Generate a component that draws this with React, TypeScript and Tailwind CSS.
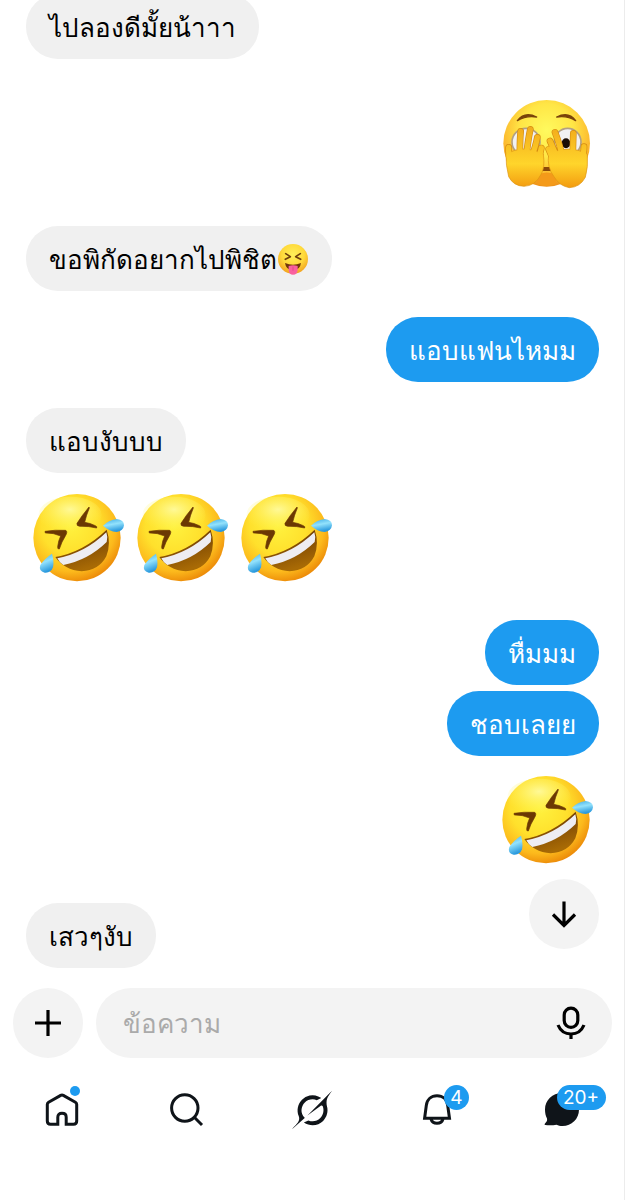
import React from "react";
import type { ReactNode } from "react";

function LaughEmoji({ id }: { id: string }) {
  return (
    <svg viewBox="18 18 312 312" className="size-[104px] shrink-0" role="img" aria-label="🤣">
      <defs>
        <radialGradient id={`${id}-face`} cx="0.42" cy="0.36" r="0.66">
          <stop offset="0" stopColor="#fff23f" />
          <stop offset="0.5" stopColor="#ffe02c" />
          <stop offset="0.8" stopColor="#fcb91c" />
          <stop offset="1" stopColor="#ec8a08" />
        </radialGradient>
        <radialGradient id={`${id}-shine`} cx="0.5" cy="0.35" r="0.6">
          <stop offset="0" stopColor="#fffdb0" stopOpacity="0.8" />
          <stop offset="1" stopColor="#fff35a" stopOpacity="0" />
        </radialGradient>
        <linearGradient id={`${id}-mouth`} x1="0" y1="0" x2="0.4" y2="1">
          <stop offset="0" stopColor="#5a2c02" />
          <stop offset="1" stopColor="#a86a05" />
        </linearGradient>
        <linearGradient id={`${id}-tear`} x1="0" y1="0" x2="0.3" y2="1">
          <stop offset="0" stopColor="#3aa9e6" />
          <stop offset="0.5" stopColor="#93e2fc" />
          <stop offset="1" stopColor="#2b9ade" />
        </linearGradient>
      </defs>
      <circle cx="171" cy="173" r="131" fill={`url(#${id}-face)`} />
      <ellipse cx="150" cy="105" rx="95" ry="55" fill={`url(#${id}-shine)`} />
      <path d="M75 154Q105 149 137 151Q144 155 136 168Q125 185 118 207Q112 208 113 200Q115 182 122 168Q100 158 76 159Z" fill="#6b3803" stroke="#6b3803" strokeWidth="2" />
      <path d="M207 81Q186 106 171 130Q169 138 179 139Q206 138 230 144Q232 139 226 137Q210 129 194 127Q199 105 208 84Z" fill="#6b3803" stroke="#6b3803" strokeWidth="2" />
      <path d="M106 231Q190 216 260 149Q274 190 259 229Q236 272 185 274Q133 270 106 231Z" fill={`url(#${id}-mouth)`} />
      <path d="M112 235Q195 219 259 157Q264 170 260 186Q205 240 130 255Q118 248 112 235Z" fill="#eeedf2" />
      <path d="M249 137Q268 119 290 117Q312 119 312 136Q310 153 290 156Q268 154 249 137Z" fill={`url(#${id}-tear)`} />
      <path d="M96 221Q72 237 61 255Q55 273 74 278Q92 280 99 262Q103 245 96 221Z" fill={`url(#${id}-tear)`} />
    </svg>
  );
}

const leftFingers = "M92 250Q84 220 86 202M120 235Q119 185 122 154M138 235Q144 180 151 148M154 235Q168 195 172 172M170 250Q181 225 184 204";
const rightFingers = "M226 250Q213 225 206 208M234 240Q220 205 210 183M249 235Q238 190 225 157M278 235Q279 190 280 160M303 250Q312 220 312 200";

function PeekEmoji() {
  return (
    <svg viewBox="45 33 312 312" className="size-[104px] shrink-0" role="img" aria-label="🫣">
      <defs>
        <radialGradient id="peek-face" cx="0.5" cy="0.35" r="0.68">
          <stop offset="0" stopColor="#fffa5e" />
          <stop offset="0.45" stopColor="#ffe646" />
          <stop offset="0.78" stopColor="#fcb52c" />
          <stop offset="1" stopColor="#e98714" />
        </radialGradient>
        <linearGradient id="peek-hand" gradientUnits="userSpaceOnUse" x1="0" y1="145" x2="0" y2="322">
          <stop offset="0" stopColor="#f3ad1c" />
          <stop offset="0.6" stopColor="#ffd52b" />
          <stop offset="1" stopColor="#f39c10" />
        </linearGradient>
      </defs>
      <circle cx="200" cy="190" r="130" fill="url(#peek-face)" />
      <g fill="#f1f1f3" stroke="#b3a082" strokeWidth="5">
        <ellipse cx="138" cy="186" rx="42" ry="41" />
        <ellipse cx="263" cy="186" rx="40" ry="41" />
      </g>
      <path d="M112 122Q134 93 170 111Q138 106 112 122ZM230 111Q266 93 287 122Q262 106 230 111Z" fill="#79430a" stroke="#79430a" strokeWidth="4" strokeLinejoin="round" />
      <ellipse cx="258" cy="190" rx="13" ry="15" fill="#1a0d05" />
      <path d="M180 261H218V273H180Z" fill="#8c4b0a" />
      <path d="M170 285Q200 270 232 285L226 312Q200 324 172 312Z" fill="#f49a1a" />
      <g fill="none" stroke="#d58c10" strokeWidth="20" strokeLinecap="round">
        <path d={leftFingers} />
        <path d={rightFingers} />
      </g>
      <g fill="url(#peek-hand)" stroke="#dd9412" strokeWidth="2">
        <path d="M78 222Q104 207 132 207Q162 207 190 222Q196 265 182 285Q165 318 132 319Q100 318 86 290Q77 255 78 222Z" />
        <path d="M206 222Q236 207 264 207Q295 207 322 222Q325 262 316 292Q300 322 268 323Q238 318 222 290Q200 262 206 222Z" />
      </g>
      <g fill="none" stroke="url(#peek-hand)" strokeWidth="16" strokeLinecap="round">
        <path d={leftFingers} />
        <path d={rightFingers} />
      </g>
    </svg>
  );
}

function TongueEmoji() {
  return (
    <svg viewBox="21 22 96 96" className="mb-1.5 inline-block size-8 align-middle" role="img" aria-label="😝">
      <defs>
        <radialGradient id="tongue-face" cx="0.5" cy="0.35" r="0.68">
          <stop offset="0" stopColor="#fff05a" />
          <stop offset="0.55" stopColor="#ffd93b" />
          <stop offset="1" stopColor="#f09a1c" />
        </radialGradient>
      </defs>
      <circle cx="69" cy="70" r="45" fill="url(#tongue-face)" />
      <path d="M47 54L61 63L46 71M91 54L77 63L92 71" fill="none" stroke="#70400d" strokeWidth="5" strokeLinecap="round" strokeLinejoin="round" />
      <path d="M45 82Q69 92 93 82Q90 104 69 104Q48 104 45 82Z" fill="#70350b" />
      <path d="M56 91Q69 86 83 91V102Q82 117 69 117Q57 117 56 102Z" fill="#f9609f" />
      <path d="M69 93V105" stroke="#d63c7c" strokeWidth="2" />
    </svg>
  );
}

function Received({ children }: { children: ReactNode }) {
  return <p className="self-start rounded-[32px] bg-[#f0f0f0] px-[23px] pt-1 text-[26px] leading-[61px] text-black">{children}</p>;
}

function Sent({ children }: { children: ReactNode }) {
  return <p className="self-end rounded-[32px] bg-[#1d9bf0] px-[23px] pt-1 text-[26px] leading-[61px] text-white">{children}</p>;
}

function Messages() {
  return (
    <section aria-label="Messages" className="relative flex flex-col overflow-hidden pr-[25px] pb-5 pl-[26px]">
      <div className="-mt-1.5 flex flex-col">
        <Received>ไปลองดีมั้ยน้าาา</Received>
      </div>
      <div className="mt-8 flex justify-end">
        <PeekEmoji />
      </div>
      <div className="mt-[31px] flex flex-col gap-[26px]">
        <Received>
          ขอพิกัดอยากไปพิชิต
          <TongueEmoji />
        </Received>
        <Sent>แอบแฟนไหมม</Sent>
        <Received>แอบงับบบ</Received>
      </div>
      <div className="mt-[13px] flex">
        <LaughEmoji id="laugh-a" />
        <LaughEmoji id="laugh-b" />
        <LaughEmoji id="laugh-c" />
      </div>
      <div className="mt-[30px] flex flex-col gap-1.5">
        <Sent>หื่มมม</Sent>
        <Sent>ชอบเลยย</Sent>
      </div>
      <div className="mt-3 flex justify-end">
        <LaughEmoji id="laugh-d" />
      </div>
      <div className="mt-[31px] flex flex-col">
        <Received>เสวๆงับ</Received>
      </div>
      <button type="button" aria-label="Scroll to latest" className="absolute right-[25px] bottom-[39px] flex size-[70px] items-center justify-center rounded-full bg-[#f3f3f3]">
        <svg viewBox="0 0 40 40" className="size-10" fill="none" stroke="#000" strokeWidth="3.2">
          <path d="M20 7.5V31M9 20.5L20 31.5L31 20.5" />
        </svg>
      </button>
    </section>
  );
}

function Composer() {
  return (
    <form className="flex gap-[13px] pr-3 pl-[13px]" onSubmit={(e) => e.preventDefault()}>
      <button type="button" aria-label="Add attachment" className="flex size-[70px] shrink-0 items-center justify-center rounded-full bg-[#f3f3f3]">
        <svg viewBox="0 0 40 40" className="size-10" fill="none" stroke="#000" strokeWidth="3.2">
          <path d="M20 7V33M7 20H33" />
        </svg>
      </button>
      <div className="flex h-[70px] min-w-0 flex-1 items-center rounded-full bg-[#f3f3f3] pr-[21px] pl-[27px]">
        <input
          type="text"
          aria-label="ข้อความ"
          placeholder="ข้อความ"
          className="h-full min-w-0 flex-1 bg-transparent pt-0.5 text-[26px] text-black outline-none placeholder:text-[#aaaaaa]"
        />
        <button type="button" aria-label="Record voice message">
          <svg viewBox="0 0 40 40" className="size-10" fill="none" stroke="#000" strokeWidth="3.2">
            <rect x="13.2" y="5.2" width="13.6" height="19.2" rx="6.8" />
            <path d="M7 22C9.5 28 14.2 31 20 31S30.500 28 33 22M20 31V36" />
          </svg>
        </button>
      </div>
    </form>
  );
}

function Tab({ label, children }: { label: string; children: ReactNode }) {
  return (
    <a href="#" aria-label={label} className="flex justify-center">
      <span className="relative block size-10">{children}</span>
    </a>
  );
}

function TabBar() {
  return (
    <nav className="grid grid-cols-5 pt-8">
      <Tab label="Home">
        <svg viewBox="0 0 40 40" className="size-10" fill="none" stroke="#0f1419" strokeWidth="3">
          <path d="M8.500 34.300Q5.300 34.300 5.300 31V14.500Q5.300 13 6.600 12.200L18.700 5.400Q20 4.700 21.300 5.400L33.400 12.200Q34.700 13 34.700 14.500V31Q34.700 34.300 31.500 34.300H24.200V27.200Q24.200 23.300 20 23.300T15.800 27.200V34.300Z" />
        </svg>
        <span className="absolute -top-1 right-[2px] size-2.5 rounded-full bg-[#1d9bf0]" />
      </Tab>
      <Tab label="Search">
        <svg viewBox="0 0 40 40" className="size-10" fill="none" stroke="#0f1419" strokeWidth="3">
          <circle cx="17.800" cy="18" r="13.200" />
          <path d="M27.300 27.300L35 35" />
        </svg>
      </Tab>
      <Tab label="Grok">
        <svg viewBox="0 0 24 24" className="size-10" fill="#0f1419">
          <path d="M9.270 15.290l7.978-5.897c.391-.29.95-.177 1.137.272.98 2.369.542 5.215-1.410 7.169-1.951 1.954-4.667 2.382-7.149 1.406l-2.711 1.257c3.889 2.661 8.611 2.003 11.562-.953 2.341-2.344 3.066-5.539 2.388-8.420l.006.007c-.983-4.232.242-5.924 2.750-9.383l.179-.248-3.301 3.305v-.01L9.267 15.292M7.623 16.723c-2.792-2.670-2.310-6.801.071-9.184 1.761-1.763 4.647-2.483 7.166-1.425l2.705-1.250a7.808 7.808 0 00-1.829-1A8.975 8.975 0 005.984 5.830c-2.533 2.536-3.330 6.436-1.962 9.764 1.022 2.487-.653 4.246-2.340 6.022-.599.630-1.199 1.259-1.682 1.925l7.620-6.815" />
        </svg>
      </Tab>
      <Tab label="Notifications">
        <svg viewBox="0 0 40 40" className="size-10" fill="none" stroke="#0f1419" strokeWidth="3">
          <path d="M7.600 28.200L9.300 15.500C10 9.500 14.300 5.800 20 5.800S30 9.500 30.700 15.500L32.500 28.200ZM14 29A6.200 5.800 0 0 0 26 29" />
        </svg>
        <span className="absolute -top-[5px] left-[27px] flex size-[25px] items-center justify-center rounded-full bg-[#1d9bf0] font-[Inter,sans-serif] text-[19px] leading-none text-white">4</span>
      </Tab>
      <Tab label="Messages, more than 20 unread">
        <svg viewBox="0 0 40 40" className="size-10" fill="#0f1419">
          <path d="M20 3C29.500 3 37 10.200 37 19.500C37 29 29.600 36 20.500 36C18 36 16.400 35.600 14.500 34.800C11 35.400 7 35.600 3.200 35C2.300 34.800 2.500 34 3 33.500C4.500 32 5.500 30.500 5 28.500C3.700 26 3 23 3 19.500C3 10.200 10.500 3 20 3Z" />
        </svg>
        <span className="absolute -top-[5px] left-[15px] flex h-[25px] w-[49px] items-center justify-center rounded-full bg-[#1d9bf0] font-[Inter,sans-serif] text-[19px] leading-none text-white">20+</span>
      </Tab>
    </nav>
  );
}

export default function App() {
  return (
    <main className="min-h-screen border-r border-[#ececec] bg-white font-['Liberation_Sans',sans-serif]">
      <Messages />
      <Composer />
      <TabBar />
    </main>
  );
}
